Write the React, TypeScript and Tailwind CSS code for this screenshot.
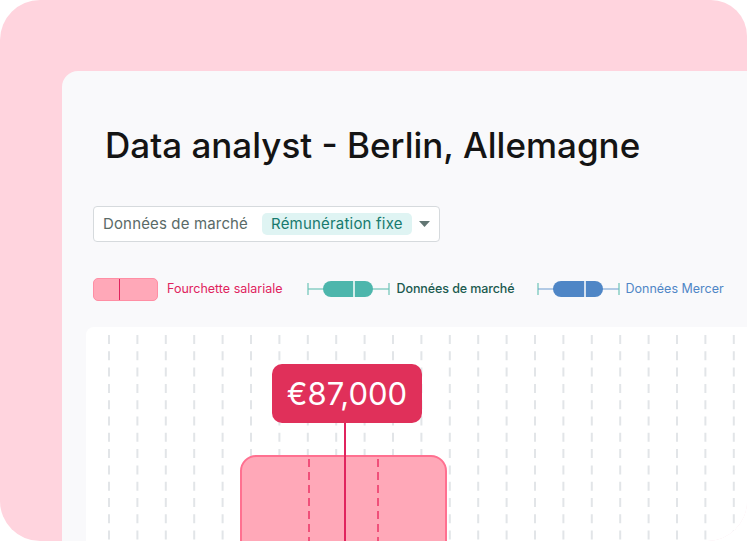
import React from "react";

const GRID_X = Array.from({ length: 24 }, (_, i) => 23 + i * 28.4);

function Whisker({ box, line, tick, divider }: { box: string; line: string; tick: string; divider: number }) {
  return (
    <svg width="84" height="18" viewBox="0 0 84 18" className="block">
      <line x1="1" y1="3" x2="1" y2="15" stroke={tick} strokeWidth="1.2" />
      <line x1="1" y1="9" x2="17" y2="9" stroke={line} strokeWidth="1.2" />
      <line x1="65" y1="9" x2="82" y2="9" stroke={line} strokeWidth="1.2" />
      <line x1="82" y1="3" x2="82" y2="15" stroke={tick} strokeWidth="1.2" />
      <rect x="16" y="1" width="50" height="16" rx="8" fill={box} />
      <line x1={16 + divider} y1="1" x2={16 + divider} y2="17" stroke="#ffffff" strokeWidth="1.5" />
    </svg>
  );
}

export default function App() {
  return (
    <div className="w-[748px] h-[542px] bg-white" style={{ fontFamily: "Inter, 'Noto Sans', sans-serif" }}>
      <div className="w-[747px] h-[541px] rounded-[40px] rounded-tr-[36px] bg-[#ffd4de] pt-[71px] pl-[62px] overflow-hidden">
        <div className="w-[700px] h-[520px] rounded-tl-[16px] bg-[#f9f9fb] pt-[54px] pl-[31px]">
          <h1 className="ml-[12px] text-[35px] leading-[40px] font-medium text-[#141414] whitespace-nowrap">
            Data analyst - Berlin, Allemagne
          </h1>

          <div className="mt-[41px] w-[347px] h-[36px] rounded-[4px] border border-[#d6dadd] bg-white flex items-center pl-[9px] whitespace-nowrap">
            <span className="shrink-0 text-[15px] text-[#5a6a67] tracking-[0.15px]">Données de marché</span>
            <span className="shrink-0 ml-[14px] h-[22px] px-[9px] rounded-[5px] bg-[#dff4f3] text-[15px] tracking-[0.2px] text-[#177a6e] flex items-center">
              Rémunération fixe
            </span>
            <svg width="11" height="6" viewBox="0 0 11 6" className="shrink-0 ml-[7px]">
              <path d="M0 0 L11 0 L5.5 6 Z" fill="#627673" />
            </svg>
          </div>

          <div className="mt-[35px] flex items-center h-[24px] whitespace-nowrap">
            <div className="relative shrink-0 w-[65px] h-[23px] rounded-[5px] bg-[#ffa8b8] border border-[#ff8ea4]">
              <div className="absolute left-[25px] top-0 bottom-0 w-px bg-[#e0245e]" />
            </div>
            <span className="ml-[9px] text-[12.5px] text-[#e0245e]">Fourchette salariale</span>
            <div className="ml-[24px] shrink-0">
              <Whisker box="#4db6ac" line="#6cc3b8" tick="#6cc3b8" divider={31} />
            </div>
            <span className="ml-[6px] text-[12.5px] font-medium text-[#1b5a4f] tracking-[-0.1px]">Données de marché</span>
            <div className="ml-[22px] shrink-0">
              <Whisker box="#4f86c6" line="#6d9bd0" tick="#6cc3b8" divider={32} />
            </div>
            <span className="ml-[5px] text-[12.5px] text-[#4f86c6]">Données Mercer</span>
          </div>

          <div className="relative mt-[26px] -ml-[7px] w-[680px] h-[260px] bg-white rounded-tl-[8px]">
            <svg width="680" height="260" className="absolute inset-0">
              {GRID_X.map((x, i) => (
                <line
                  key={i}
                  x1={x}
                  y1="8"
                  x2={x}
                  y2="260"
                  stroke="#e2e5e8"
                  strokeWidth="2"
                  strokeDasharray="9 7.3"
                />
              ))}
            </svg>
            <div className="absolute left-[154px] top-[128px] w-[207px] h-[140px] rounded-t-[16px] bg-[#ffa8b8] border-2 border-[#ff7090]">
              <svg width="207" height="140" className="absolute -left-[2px] -top-[2px]">
                <line x1="69" y1="4" x2="69" y2="140" stroke="#f0507a" strokeWidth="2" strokeDasharray="8 5" />
                <line x1="138" y1="4" x2="138" y2="140" stroke="#f0507a" strokeWidth="2" strokeDasharray="8 5" />
              </svg>
            </div>
            <div className="absolute left-[258px] top-[90px] w-[2px] h-[180px] bg-[#e0245e]" />
            <div className="absolute left-[186px] top-[37px] w-[150px] h-[59px] rounded-[10px] bg-[#e0305a] flex items-center justify-center">
              <span className="text-[31px] text-white leading-none">€87,000</span>
            </div>
          </div>
        </div>
      </div>
    </div>
  );
}
